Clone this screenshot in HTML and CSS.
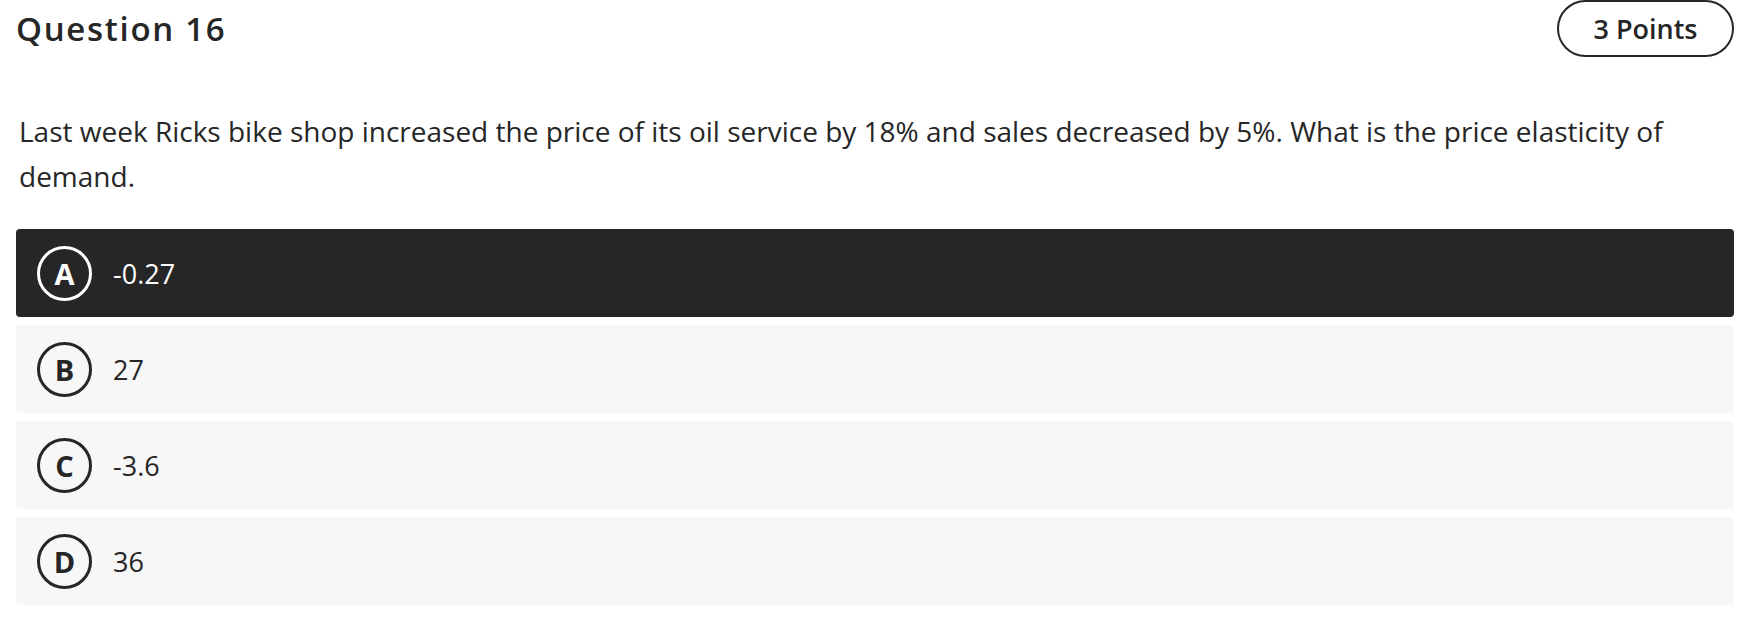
FILE: index.html
```html
<!DOCTYPE html>
<html lang="en">
<head>
<meta charset="utf-8">
<title>Question 16</title>
<link rel="stylesheet" href="styles.css">
</head>
<body>
<div class="page">
  <div class="header">
    <h1 class="title">Question 16</h1>
    <div class="points">3 Points</div>
  </div>
  <p class="question">Last week Ricks bike shop increased the price of its oil service by 18% and sales decreased by 5%. What is the price elasticity of demand.</p>
  <div class="options">
    <div class="option selected"><span class="letter">A</span><span class="answer">-0.27</span></div>
    <div class="option"><span class="letter">B</span><span class="answer">27</span></div>
    <div class="option"><span class="letter">C</span><span class="answer">-3.6</span></div>
    <div class="option"><span class="letter">D</span><span class="answer">36</span></div>
  </div>
</div>
</body>
</html>
```
FILE: styles.css
```css
html, body {
  margin: 0;
  padding: 0;
  background: #ffffff;
}
body {
  font-family: "Open Sans", "Noto Sans", "Liberation Sans", sans-serif;
  color: #262626;
}
.page {
  padding: 0 28px 0 16px;
}
.header {
  display: flex;
  align-items: center;
  justify-content: space-between;
  height: 57px;
}
.title {
  margin: 0;
  font-size: 33px;
  font-weight: 600;
  letter-spacing: 1.7px;
  line-height: 40px;
  color: #262626;
}
.points {
  box-sizing: border-box;
  height: 57px;
  width: 177px;
  border: 2px solid #262626;
  border-radius: 29px;
  display: flex;
  align-items: center;
  justify-content: center;
  font-size: 27px;
  font-weight: 600;
}
.question {
  margin: 52px 0 30px 0;
  padding: 0 3px;
  font-size: 28px;
  line-height: 45px;
}
.options {
  display: flex;
  flex-direction: column;
  gap: 8px;
}
.option {
  display: flex;
  align-items: center;
  height: 88px;
  padding-left: 21px;
  background: #f7f7f7;
  border-radius: 4px;
  color: #262626;
}
.option.selected {
  background: #262626;
  color: #ffffff;
}
.letter {
  box-sizing: border-box;
  width: 55px;
  height: 55px;
  border: 3px solid currentColor;
  border-radius: 50%;
  display: flex;
  align-items: center;
  justify-content: center;
  font-size: 29px;
  font-weight: 700;
  flex: none;
}
.answer {
  margin-left: 21px;
  font-size: 27px;
}
```
